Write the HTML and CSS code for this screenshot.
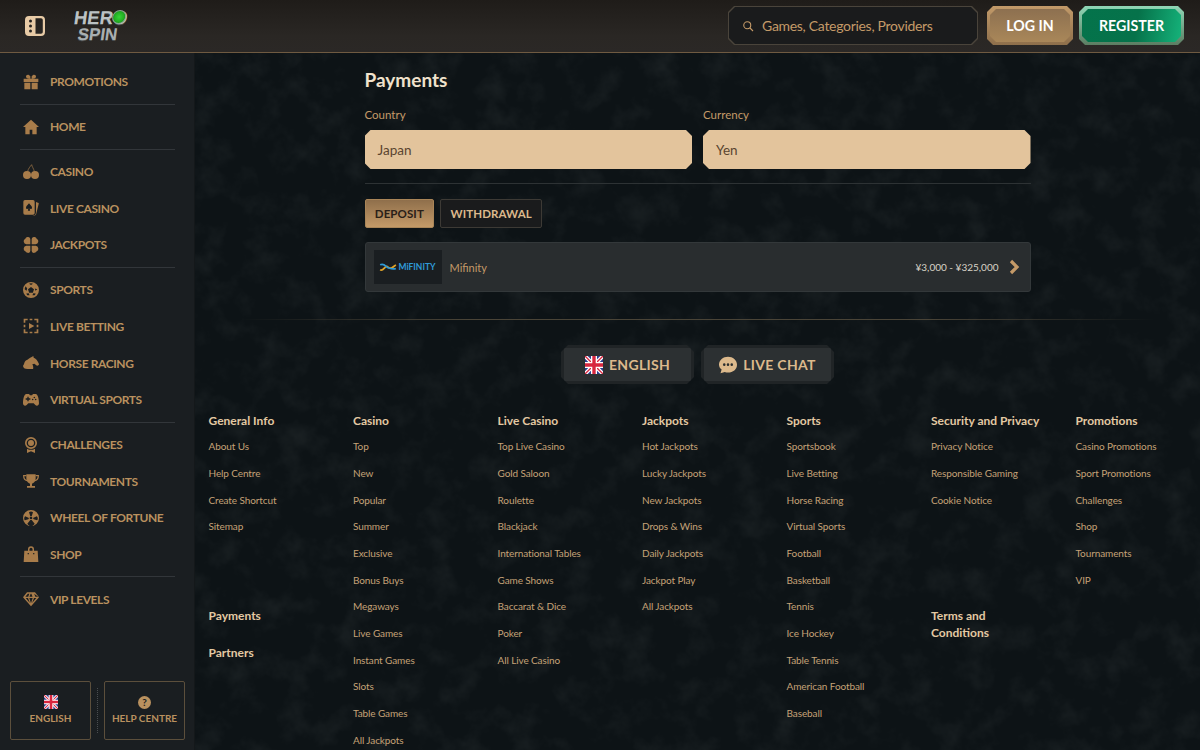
FILE: index.html
```html
<!DOCTYPE html>
<html lang="en">
<head>
    <meta charset="UTF-8">
    <meta name="viewport" content="width=device-width, initial-scale=1.0">
    <title>Payments - Hero Spin</title>
    <link rel="stylesheet" href="styles.css">
</head>
<body>
    <svg class="defs" width="0" height="0">
        <symbol id="flag" viewBox="0 0 24 24">
            <rect width="24" height="24" rx="2" fill="#2b3f8f"/>
            <path d="M0 0L24 24M24 0L0 24" stroke="#fff" stroke-width="5"/>
            <path d="M0 0L24 24M24 0L0 24" stroke="#d8263f" stroke-width="1.8"/>
            <path d="M12 0V24M0 12H24" stroke="#fff" stroke-width="8"/>
            <path d="M12 0V24M0 12H24" stroke="#d8263f" stroke-width="4.5"/>
        </symbol>
    </svg>

    <header class="topbar">
        <div class="brand">
            <svg class="menu-icon" viewBox="0 0 24 24">
                <path fill-rule="evenodd" fill="#e8cba6" d="M6 2h12a4 4 0 0 1 4 4v12a4 4 0 0 1-4 4H6a4 4 0 0 1-4-4V6a4 4 0 0 1 4-4zm6.500 2.200v15.600H18a1.800 1.800 0 0 0 1.800-1.800V6A1.800 1.800 0 0 0 18 4.200zM7.500 5.500a1.500 1.500 0 1 0 0 3 1.500 1.500 0 0 0 0-3zm0 5a1.500 1.500 0 1 0 0 3 1.500 1.500 0 0 0 0-3zm0 5a1.500 1.500 0 1 0 0 3 1.500 1.500 0 0 0 0-3z"/>
            </svg>
            <div class="logo">
                <span class="logo-top">HERO</span>
                <span class="logo-bottom">SPIN</span>
                <span class="logo-gem"></span>
            </div>
        </div>
        <div class="top-actions">
            <div class="search">
                <div class="search-in">
                    <svg class="search-icon" viewBox="0 0 24 24"><circle cx="10.500" cy="10.500" r="7" fill="none" stroke="#c49a68" stroke-width="2.200"/><path d="M16 16l6 6" stroke="#c49a68" stroke-width="2.200"/></svg>
                    <span>Games, Categories, Providers</span>
                </div>
            </div>
            <a class="btn-login"><span>LOG IN</span></a>
            <a class="btn-register"><span>REGISTER</span></a>
        </div>
    </header>

    <div class="layout">
        <aside class="sidebar">
            <nav class="side-nav">
                <a class="side-item">
                    <svg viewBox="0 0 24 24"><path d="M1 7h22v5H1zM2 13h9v10H2zM13 13h9v10h-9zM11 7V3.500C9 0 4.500 .5 4.500 4c0 1.500 2 3 6.500 3zm2 0V3.500C15 0 19.500 .5 19.500 4c0 1.500-2 3-6.500 3z"/></svg>
                    PROMOTIONS
                </a>
                <hr class="side-line">
                <a class="side-item">
                    <svg viewBox="0 0 24 24"><path d="M12 1L0 12h3.500v11H10v-7h4v7h6.500V12H24z"/></svg>
                    HOME
                </a>
                <hr class="side-line">
                <a class="side-item">
                    <svg viewBox="0 0 24 24"><circle cx="6" cy="16.500" r="6"/><circle cx="18" cy="16.500" r="6"/><path d="M7 11c1-4 3.500-7 6-10 .5 3 3 6 4 10" fill="none" stroke="#a87c4a" stroke-width="1"/></svg>
                    CASINO
                </a>
                <a class="side-item">
                    <svg viewBox="0 0 24 24"><path fill-rule="evenodd" d="M3 0h12a2.500 2.500 0 0 1 2.500 2.500v17A2.500 2.500 0 0 1 15 22H3a2.500 2.500 0 0 1-2.500-2.500v-17A2.500 2.500 0 0 1 3 0zm6 5c-2 3-4.500 4-4.500 6.500 0 2 2.500 2.500 3.500 1L7.300 16h3.400L10 12.500c1 1.500 3.500 1 3.500-1C13.500 9 11 8 9 5z"/><path d="M19.500 3l3 1a1.500 1.500 0 0 1 1 2L19.500 22l-3 2h-2.500c3-.5 4.500-1.500 5-3.500l.5-2z"/></svg>
                    LIVE CASINO
                </a>
                <a class="side-item">
                    <svg viewBox="0 0 24 24"><path d="M11 11H5a4.500 4.500 0 0 1-1.500-8.500C4.500 .5 6.500 0 8 0a3.500 3.500 0 0 1 3 3.500zM13 11h6a4.500 4.500 0 0 0 1.500-8.500C19.500 .5 17.500 0 16 0a3.500 3.500 0 0 0-3 3.500zM11 13H5a4.500 4.500 0 0 0-1.500 8.500C4.500 23.500 6.500 24 8 24a3.500 3.500 0 0 0 3-3.500zM13 13h6a4.500 4.500 0 0 1 1.500 8.500c-1 2-3 2.500-4.500 2.500a3.500 3.500 0 0 1-3-3.500z"/></svg>
                    JACKPOTS
                </a>
                <hr class="side-line">
                <a class="side-item">
                    <svg viewBox="0 0 24 24"><path fill-rule="evenodd" d="M12 0a12 12 0 1 1 0 24 12 12 0 0 1 0-24zm0 7.500l-4.500 3.300 1.700 5.400h5.600l1.700-5.400zM9 2.500l3 2 3-2a9.800 9.800 0 0 0-6 0zM2.500 11l2.800 2 1-3.200L4 6.500a9.800 9.800 0 0 0-1.500 4.500zm19 0L17.700 9.800l1 3.200 2.800-2zM6.500 20l3.300-.3-1.200-2.800-3.600.5A9.800 9.800 0 0 0 6.500 20zm11 0a9.800 9.800 0 0 0 1.500-2.600l-3.600-.5-1.200 2.800z"/></svg>
                    SPORTS
                </a>
                <a class="side-item">
                    <svg viewBox="0 0 24 24"><path d="M1 7V1h6v2.500H3.500V7zM17 1h6v6h-2.500V3.500H17zM23 17v6h-6v-2.500h3.500V17zM7 23H1v-6h2.500v3.500H7z"/><path d="M1 10h2.500v4H1zM20.500 10H23v4h-2.500zM10 1h4v2.500h-4zM10 20.500h4V23h-4z"/><path d="M9 7.500l8 4.500-8 4.500z"/></svg>
                    LIVE BETTING
                </a>
                <a class="side-item">
                    <svg viewBox="0 0 24 24"><path d="M13 3l2.500-1.500.5 2.500c3 1 6 4 8 9.500.3 1-1.500 3-3 2.500L17 13l-3 1c1 2 2 5 1 7H7C2.500 21 0 19 0 16c2-1 1.500-6 5-8 2-1 5-3.500 8-5z"/></svg>
                    HORSE RACING
                </a>
                <a class="side-item">
                    <svg viewBox="0 0 24 24"><path fill-rule="evenodd" d="M5 3h4l1.500 2h3L15 3h4c3.500 0 5 8.500 5 14 0 3.500-3.500 5-5.500 2.500L16 17H8l-2.500 2.500C3.500 22 0 20.500 0 17 0 11.500 1.500 3 5 3zm1.500 4v2.500H4v2h2.500V14h2v-2.500H11v-2H8.500V7zm10.500 0a1.200 1.200 0 1 0 0 2.400A1.200 1.200 0 0 0 17 7zm-2.500 3a1.200 1.200 0 1 0 0 2.400 1.200 1.200 0 0 0 0-2.400zm4.500 0a1.200 1.200 0 1 0 0 2.400 1.200 1.200 0 0 0 0-2.400z"/></svg>
                    VIRTUAL SPORTS
                </a>
                <hr class="side-line">
                <a class="side-item">
                    <svg viewBox="0 0 24 24"><path fill-rule="evenodd" d="M12 0a9 9 0 1 1 0 18 9 9 0 0 1 0-18zm0 2.500a6.500 6.500 0 1 0 0 13 6.500 6.500 0 0 0 0-13zm0 2a4.500 4.500 0 1 1 0 9 4.500 4.500 0 0 1 0-9z"/><path d="M6 17.500l3 1.500h6l3-1.500V24l-6-2.500L6 24z"/></svg>
                    CHALLENGES
                </a>
                <a class="side-item">
                    <svg viewBox="0 0 24 24"><path d="M5 2h14v6c0 5-3 7.500-5.500 8v3.500H18V22H6v-2.500h4.500V16C8 15.500 5 13 5 8z"/><path d="M5 4H1c0 4 1.500 6.500 5 7.500M19 4h4c0 4-1.500 6.500-5 7.500" fill="none" stroke="#a87c4a" stroke-width="1.800"/></svg>
                    TOURNAMENTS
                </a>
                <a class="side-item">
                    <svg viewBox="0 0 24 24"><path fill-rule="evenodd" d="M12 0a12 12 0 1 1 0 24 12 12 0 0 1 0-24zm0 10a2 2 0 1 0 0 4 2 2 0 0 0 0-4zM9 3.200L11 9.500h2l2-6.300a5 5 0 0 0-6 0zM3.200 9.500L9 12l-1 2-5.300 1.500a5 5 0 0 1 .5-6zm17.600 0L15 12l1 2 5.300 1.500a5 5 0 0 0-.5-6zM6.500 20.500L11 15h2l4.500 5.500a6 6 0 0 1-11 0z"/></svg>
                    WHEEL OF FORTUNE
                </a>
                <a class="side-item">
                    <svg viewBox="0 0 24 24"><path fill-rule="evenodd" d="M7.500 7V5a4.500 4.500 0 0 1 9 0v2H22l1 17H1L2 7zm2.200 0h4.600V5a2.300 2.300 0 0 0-4.600 0zM7 10.500v2h1.800v-2zm8.200 0v2H17v-2z"/></svg>
                    SHOP
                </a>
                <hr class="side-line">
                <a class="side-item">
                    <svg viewBox="0 0 24 24"><path fill-rule="evenodd" d="M6 2h12l6 7.500L12 23 0 9.500zm1.200 2L3.500 8.500h4.300L9.500 4zm4.300 0L9.700 8.500h4.600L12.500 4zm5.300 0l1.700 4.500h4.300L16.800 4zM4 10.500l6.300 7.500-2.800-7.500zm5.500 0l2.500 8 2.500-8zm7 0L13.700 18l6.300-7.500z"/></svg>
                    VIP LEVELS
                </a>
            </nav>
            <div class="side-bottom">
                <a class="side-box">
                    <svg class="side-box-icon"><use href="#flag"/></svg>
                    ENGLISH
                </a>
                <span class="side-dots"></span>
                <a class="side-box">
                    <span class="help-dot">?</span>
                    HELP CENTRE
                </a>
            </div>
        </aside>

        <main class="main">
            <svg class="grain" width="100%" height="100%">
                <filter id="grain-f">
                    <feTurbulence type="fractalNoise" baseFrequency="0.035" numOctaves="4" seed="7"/>
                    <feColorMatrix type="matrix" values="0 0 0 0 0.42  0 0 0 0 0.46  0 0 0 0 0.44  1.6 0 0 0 -0.72"/>
                </filter>
                <rect width="100%" height="100%" filter="url(#grain-f)"/>
            </svg>

            <section class="payments">
                <h1>Payments</h1>
                <div class="field-row">
                    <div class="field">
                        <label>Country</label>
                        <div class="select">Japan</div>
                    </div>
                    <div class="field">
                        <label>Currency</label>
                        <div class="select">Yen</div>
                    </div>
                </div>
                <hr class="line">
                <div class="tabs">
                    <a class="tab tab-active">DEPOSIT</a>
                    <a class="tab">WITHDRAWAL</a>
                </div>
                <div class="method">
                    <div class="method-logo">
                        <svg viewBox="0 0 24 14" width="18" height="10"><path d="M1 11c5 3 7-8 11-4s7 0 11-3" fill="none" stroke="#e0a42a" stroke-width="2.400"/><path d="M1 4c6-3 8 3 11 4s7 3 11 1" fill="none" stroke="#2f9bd8" stroke-width="2.400"/></svg>
                        <span>MiFINITY</span>
                    </div>
                    <span class="method-name">Mifinity</span>
                    <span class="method-range">¥3,000 - ¥325,000</span>
                    <svg class="method-arrow" viewBox="0 0 12 16"><path d="M3 2l6 6-6 6" fill="none" stroke="#c49a68" stroke-width="3.200"/></svg>
                </div>
            </section>

            <hr class="wide-line">

            <div class="foot-btns">
                <a class="foot-btn"><span class="foot-btn-in"><svg class="foot-flag"><use href="#flag"/></svg>ENGLISH</span></a>
                <a class="foot-btn"><span class="foot-btn-in">
                    <svg class="foot-flag" viewBox="0 0 24 24"><path fill="#dcb98c" d="M12 1c6.600 0 12 4.500 12 10.500S18.600 22 12 22c-1.500 0-3-.2-4.300-.7L2 23l1.500-5C1.300 16.200 0 14 0 11.500 0 5.500 5.400 1 12 1z"/><circle cx="7" cy="11.500" r="1.700" fill="#2a2d2e"/><circle cx="12" cy="11.500" r="1.700" fill="#2a2d2e"/><circle cx="17" cy="11.500" r="1.700" fill="#2a2d2e"/></svg>
                    LIVE CHAT</span></a>
            </div>

            <footer class="foot-cols">
                <div class="foot-col">
                    <div class="foot-block">
                        <h4>General Info</h4>
                        <a>About Us</a><a>Help Centre</a><a>Create Shortcut</a><a>Sitemap</a>
                    </div>
                    <h4 class="foot-solo">Payments</h4>
                    <h4 class="foot-solo">Partners</h4>
                </div>
                <div class="foot-col">
                    <div class="foot-block">
                        <h4>Casino</h4>
                        <a>Top</a><a>New</a><a>Popular</a><a>Summer</a><a>Exclusive</a><a>Bonus Buys</a><a>Megaways</a><a>Live Games</a><a>Instant Games</a><a>Slots</a><a>Table Games</a><a>All Jackpots</a>
                    </div>
                </div>
                <div class="foot-col">
                    <div class="foot-block">
                        <h4>Live Casino</h4>
                        <a>Top Live Casino</a><a>Gold Saloon</a><a>Roulette</a><a>Blackjack</a><a>International Tables</a><a>Game Shows</a><a>Baccarat &amp; Dice</a><a>Poker</a><a>All Live Casino</a>
                    </div>
                </div>
                <div class="foot-col">
                    <div class="foot-block">
                        <h4>Jackpots</h4>
                        <a>Hot Jackpots</a><a>Lucky Jackpots</a><a>New Jackpots</a><a>Drops &amp; Wins</a><a>Daily Jackpots</a><a>Jackpot Play</a><a>All Jackpots</a>
                    </div>
                </div>
                <div class="foot-col">
                    <div class="foot-block">
                        <h4>Sports</h4>
                        <a>Sportsbook</a><a>Live Betting</a><a>Horse Racing</a><a>Virtual Sports</a><a>Football</a><a>Basketball</a><a>Tennis</a><a>Ice Hockey</a><a>Table Tennis</a><a>American Football</a><a>Baseball</a>
                    </div>
                </div>
                <div class="foot-col">
                    <div class="foot-block">
                        <h4>Security and Privacy</h4>
                        <a>Privacy Notice</a><a>Responsible Gaming</a><a>Cookie Notice</a>
                    </div>
                    <h4 class="foot-solo foot-terms">Terms and Conditions</h4>
                </div>
                <div class="foot-col">
                    <div class="foot-block">
                        <h4>Promotions</h4>
                        <a>Casino Promotions</a><a>Sport Promotions</a><a>Challenges</a><a>Shop</a><a>Tournaments</a><a>VIP</a>
                    </div>
                </div>
            </footer>
        </main>
    </div>
</body>
</html>
```

FILE: styles.css
```css
* {
    box-sizing: border-box;
}
html, body {
    height: 100%;
    margin: 0;
    overflow: hidden;
}
body {
    font-family: Lato, "Open Sans", sans-serif;
    background-color: #0d1316;
    color: #c5a277;
    display: flex;
    flex-direction: column;
}
h1, h4, hr {
    margin: 0;
}
.defs {
    display: block;
    height: 0;
}

/* top bar */
.topbar {
    flex: none;
    height: 53px;
    display: flex;
    justify-content: space-between;
    align-items: center;
    padding: 0 16px 1px 23px;
    background: linear-gradient(180deg, #1f1c19 0%, #2a2724 70%, #2b2826 100%);
    border-bottom: 1px solid #6f5a41;
}
.brand {
    display: flex;
    align-items: center;
    gap: 26px;
}
.menu-icon {
    width: 24px;
    height: 24px;
}
.logo {
    position: relative;
    width: 52px;
    height: 33px;
    font-family: "Liberation Sans", sans-serif;
    font-weight: 700;
    color: #bcc2c3;
    line-height: 17px;
    font-size: 18.500px;
    white-space: nowrap;
    transform: skewX(-8deg);
    text-shadow: 0 1px 0 #4d5152;
}
.logo-top, .logo-bottom {
    display: block;
}
.logo-bottom {
    padding-left: 6px;
    color: #a9afb0;
    font-size: 17px;
}
.logo-gem {
    position: absolute;
    top: 1px;
    right: 0;
    width: 14px;
    height: 14px;
    border-radius: 50%;
    background: radial-gradient(circle, #38d438 0%, #22b022 55%, #126b16 100%);
    border: 1px solid #87a78e;
}
.top-actions {
    display: flex;
    align-items: center;
    gap: 6px;
    height: 39px;
}
.search, .search-in, .btn-login, .btn-login span, .btn-register, .btn-register span {
    clip-path: polygon(6px 0, calc(100% - 6px) 0, 100% 6px, 100% calc(100% - 6px), calc(100% - 6px) 100%, 6px 100%, 0 calc(100% - 6px), 0 6px);
}
.search {
    width: 250px;
    height: 39px;
    margin-right: 3px;
    padding: 1px;
    background-color: #4a443b;
}
.search-in {
    height: 100%;
    display: flex;
    align-items: center;
    gap: 8px;
    padding-left: 13px;
    background-color: #1a1b1c;
    font-size: 14px;
    letter-spacing: -0.3px;
    color: #c49a68;
}
.search-icon {
    width: 12px;
    height: 12px;
}
.btn-login, .btn-register {
    display: block;
    height: 39px;
    padding: 3px;
    font-size: 14.200px;
    font-weight: 700;
    color: #fff;
}
.btn-login span, .btn-register span {
    display: flex;
    height: 100%;
    align-items: center;
    justify-content: center;
}
.btn-login {
    width: 86px;
    background: linear-gradient(180deg, #c29a69, #8e6f4b);
}
.btn-login span {
    background: linear-gradient(180deg, #8d7050, #a98759);
}
.btn-register {
    width: 105px;
    background: linear-gradient(180deg, #8fd7b6, #5c7d62);
}
.btn-register span {
    background: linear-gradient(100deg, #04734b 0%, #06724a 55%, #15b27a 100%);
}

/* page body */
.layout {
    flex: 1;
    min-height: 0;
    display: flex;
}
.sidebar {
    flex: none;
    width: 195px;
    display: flex;
    flex-direction: column;
    justify-content: space-between;
    padding: 10.500px 9px 10px 0;
    background-color: #1a1e21;
    border-right: 1px solid #14181a;
}
.side-nav {
    display: flex;
    flex-direction: column;
}
.side-item {
    display: flex;
    align-items: center;
    height: 36.6px;
    padding-left: 23px;
    gap: 11px;
    font-size: 12px;
    letter-spacing: -0.4px;
    font-weight: 700;
    color: #b9915f;
    white-space: nowrap;
}
.side-item svg {
    flex: none;
    width: 16px;
    height: 16px;
    fill: #a87c4a;
}
.side-line {
    flex: none;
    height: 1px;
    margin: 3.700px 10px 3.700px 20px;
    border: none;
    background-color: #32363a;
}
.side-bottom {
    display: flex;
    align-items: stretch;
    justify-content: space-between;
    height: 59px;
    padding-left: 10px;
}
.side-box {
    width: 81px;
    display: flex;
    flex-direction: column;
    align-items: center;
    justify-content: center;
    gap: 3px;
    padding-bottom: 2px;
    border: 1px solid #5c4f3c;
    border-radius: 2px;
    font-size: 10px;
    font-weight: 700;
    color: #b9915f;
    white-space: nowrap;
}
.side-box-icon {
    width: 14px;
    height: 14px;
}
.side-dots {
    margin: 7px 0;
    border-left: 1px dotted #4a4d50;
}
.help-dot {
    width: 13px;
    height: 13px;
    border-radius: 50%;
    background-color: #b9915f;
    color: #1a1e21;
    font-size: 10px;
    line-height: 13px;
    text-align: center;
}

/* main column */
.main {
    position: relative;
    flex: 1;
    min-width: 0;
    overflow: hidden;
    background-color: #0d1316;
    padding-top: 15px;
}
.grain {
    position: absolute;
    top: 0;
    left: 0;
    opacity: 0.1;
}
.payments, .wide-line, .foot-btns, .foot-cols {
    position: relative;
}
.payments {
    width: 666px;
    margin-left: 169.500px;
}
.payments h1 {
    font-size: 19px;
    line-height: 24px;
    font-weight: 700;
    color: #f0e2cc;
}
.field-row {
    display: flex;
    gap: 11px;
    margin-top: 15px;
}
.field {
    flex: 1;
}
.field label {
    display: block;
    font-size: 11.500px;
    line-height: 16px;
    color: #c49a68;
    margin-bottom: 7px;
}
.select {
    height: 39px;
    padding-left: 13px;
    line-height: 40px;
    font-size: 13.500px;
    color: #5a4530;
    background-color: #e3c49c;
    clip-path: polygon(6px 0, calc(100% - 6px) 0, 100% 6px, 100% calc(100% - 6px), calc(100% - 6px) 100%, 6px 100%, 0 calc(100% - 6px), 0 6px);
}
.line {
    height: 1px;
    margin-top: 14px;
    border: none;
    background-color: #2d3234;
}
.tabs {
    display: flex;
    gap: 6px;
    margin-top: 15px;
}
.tab {
    height: 29px;
    padding: 0 9.300px;
    line-height: 27px;
    font-size: 11.500px;
    font-weight: 700;
    letter-spacing: 0.1px;
    color: #dcb98c;
    background-color: #1a1b1c;
    border: 1px solid #3d3a35;
    border-radius: 2px;
}
.tab-active {
    color: #2a2018;
    background: linear-gradient(180deg, #8f6f4b, #c49a68);
    border-color: #a98558;
}
.method {
    display: flex;
    align-items: center;
    height: 50px;
    margin-top: 14px;
    padding: 0 10px 0 8px;
    background-color: #292d2f;
    border: 1px solid #33383a;
    border-radius: 3px;
}
.method-logo {
    width: 68px;
    height: 34px;
    display: flex;
    align-items: center;
    justify-content: center;
    gap: 1px;
    background-color: #1a1e21;
    font-size: 8.500px;
    font-weight: 700;
    color: #2f9bd8;
}
.method-name {
    margin-left: 8px;
    font-size: 11px;
    color: #c49a68;
}
.method-range {
    margin-left: auto;
    font-size: 10px;
    color: #d8d2c6;
}
.method-arrow {
    width: 12px;
    height: 16px;
    margin-left: 9px;
}
.wide-line {
    height: 1px;
    margin: 27px 45px 0;
    border: none;
    background: linear-gradient(90deg, transparent, #4a4437 25%, #4a4437 75%, transparent);
}
.foot-btns {
    display: flex;
    justify-content: center;
    gap: 7px;
    margin-top: 25px;
    padding-right: 0;
}
.foot-btn {
    display: block;
    width: 133px;
    height: 39px;
    padding: 3px;
    background-color: #202426;
    clip-path: polygon(7px 0, calc(100% - 7px) 0, 100% 7px, 100% calc(100% - 7px), calc(100% - 7px) 100%, 7px 100%, 0 calc(100% - 7px), 0 7px);
}
.foot-btn-in {
    display: flex;
    align-items: center;
    justify-content: center;
    gap: 6px;
    height: 100%;
    background-color: #2c3032;
    font-size: 14px;
    font-weight: 700;
    letter-spacing: 0.3px;
    color: #dcb98c;
}
.foot-flag {
    width: 18px;
    height: 18px;
}
.foot-cols {
    display: grid;
    grid-template-columns: repeat(7, 144.500px);
    margin: 26.500px 0 0 13.500px;
}
.foot-block {
    min-height: 195.500px;
}
.foot-col h4 {
    font-size: 12px;
    line-height: 20px;
    font-weight: 700;
    color: #e3c9a3;
}
.foot-block h4 {
    margin-bottom: 2.800px;
}
.foot-block a {
    display: block;
    height: 26.700px;
    line-height: 26.700px;
    font-size: 10px;
    letter-spacing: -0.1px;
    color: #c5a277;
    white-space: nowrap;
}
.foot-solo {
    margin-bottom: 16.500px;
}
.foot-terms {
    width: 80px;
    line-height: 16.500px !important;
    margin-top: 2px;
}
```
